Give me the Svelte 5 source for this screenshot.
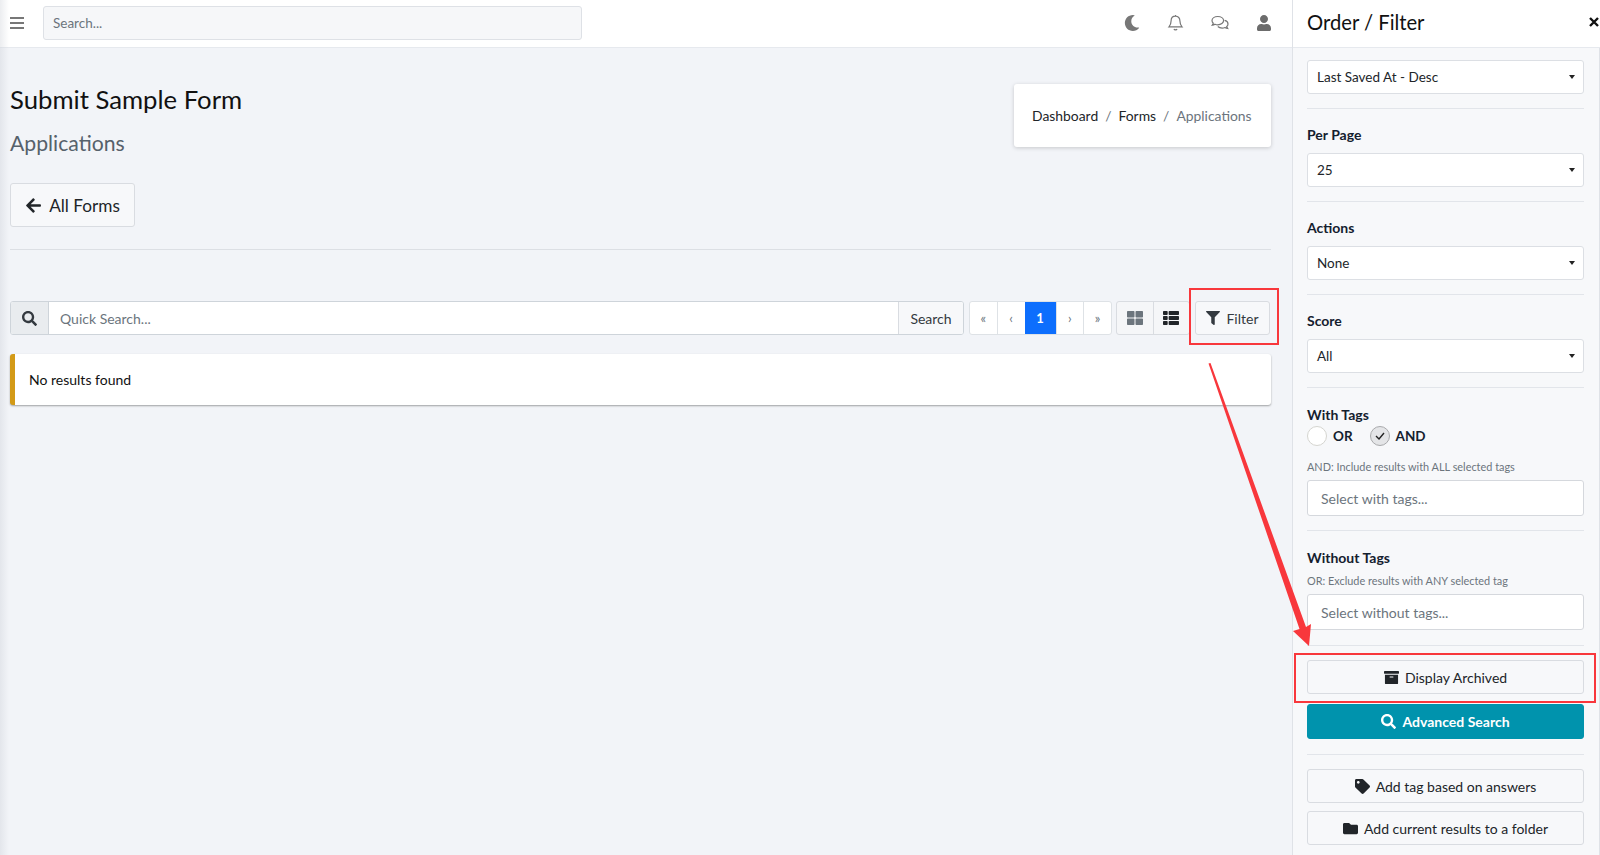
<script>
  const icons = {
    search: ['0 0 512 512', 'M505 442.7L405.3 343c-4.5-4.5-10.6-7-17-7H372c27.6-35.3 44-79.7 44-128C416 93.1 322.9 0 208 0S0 93.1 0 208s93.1 208 208 208c48.3 0 92.7-16.4 128-44v16.3c0 6.4 2.5 12.5 7 17l99.7 99.7c9.4 9.4 24.6 9.4 33.9 0l28.3-28.3c9.4-9.4 9.4-24.6.1-34zM208 336c-70.7 0-128-57.2-128-128 0-70.7 57.2-128 128-128 70.7 0 128 57.2 128 128 0 70.7-57.2 128-128 128z'],
    filter: ['0 0 512 512', 'M487.976 0H24.028C2.71 0-8.047 25.866 7.058 40.971L192 225.941V432c0 7.831 3.821 15.17 10.237 19.662l80 55.98C298.02 518.69 320 507.493 320 487.98V225.941l184.947-184.97C520.021 25.896 509.338 0 487.976 0z'],
    moon: ['0 0 512 512', 'M283.211 512c78.962 0 151.079-35.925 198.857-94.792 7.068-8.708-.639-21.43-11.562-19.35-124.203 23.654-238.262-71.576-238.262-196.954 0-72.222 38.662-138.635 101.498-174.394 9.686-5.512 7.25-20.197-3.756-22.23A258.156 258.156 0 0 0 283.211 0c-141.309 0-256 114.511-256 256 0 141.309 114.511 256 256 256z'],
    user: ['0 0 448 512', 'M224 256c70.7 0 128-57.3 128-128S294.7 0 224 0 96 57.3 96 128s57.3 128 128 128zm89.6 32h-16.7c-22.2 10.2-46.9 16-72.9 16s-50.6-5.8-72.9-16h-16.7C60.2 288 0 348.2 0 422.4V464c0 26.5 21.5 48 48 48h352c26.5 0 48-21.5 48-48v-41.6c0-74.2-60.2-134.4-134.4-134.4z'],
    tag: ['0 0 512 512', 'M0 252.118V48C0 21.49 21.49 0 48 0h204.118a48 48 0 0 1 33.941 14.059l211.882 211.882c18.745 18.745 18.745 49.137 0 67.882L293.823 497.941c-18.745 18.745-49.137 18.745-67.882 0L14.059 286.059A48 48 0 0 1 0 252.118zM112 64c-26.51 0-48 21.49-48 48s21.49 48 48 48 48-21.49 48-48-21.49-48-48-48z'],
    folder: ['0 0 512 512', 'M464 128H272l-64-64H48C21.49 64 0 85.49 0 112v288c0 26.51 21.49 48 48 48h416c26.51 0 48-21.49 48-48V176c0-26.51-21.49-48-48-48z'],
    archive: ['0 0 512 512', 'M32 448c0 17.7 14.3 32 32 32h384c17.7 0 32-14.3 32-32V160H32v288zm160-212c0-6.6 5.4-12 12-12h104c6.6 0 12 5.4 12 12v8c0 6.6-5.4 12-12 12H204c-6.6 0-12-5.4-12-12v-8zM480 32H32C14.3 32 0 46.3 0 64v48c0 8.8 7.2 16 16 16h480c8.8 0 16-7.2 16-16V64c0-17.7-14.3-32-32-32z'],
    back: ['0 0 448 512', 'M257.5 445.1l-22.2 22.2c-9.4 9.4-24.6 9.4-33.9 0L7 273c-9.4-9.4-9.4-24.6 0-33.9L201.4 44.7c9.4-9.4 24.6-9.4 33.9 0l22.2 22.2c9.5 9.5 9.3 25-.4 34.3L136.6 216H424c13.3 0 24 10.7 24 24v32c0 13.3-10.7 24-24 24H136.6l120.5 114.8c9.8 9.3 10 24.8.4 34.3z'],
    grid: ['0 0 512 512', 'M296 32h192c13.255 0 24 10.745 24 24v160c0 13.255-10.745 24-24 24H296c-13.255 0-24-10.745-24-24V56c0-13.255 10.745-24 24-24zm-80 0H24C10.745 32 0 42.745 0 56v160c0 13.255 10.745 24 24 24h192c13.255 0 24-10.745 24-24V56c0-13.255-10.745-24-24-24zM0 296v160c0 13.255 10.745 24 24 24h192c13.255 0 24-10.745 24-24V296c0-13.255-10.745-24-24-24H24c-13.255 0-24 10.745-24 24zm296 184h192c13.255 0 24-10.745 24-24V296c0-13.255-10.745-24-24-24H296c-13.255 0-24 10.745-24 24v160c0 13.255 10.745 24 24 24z'],
    list: ['0 0 512 512', 'M149.333 216v80c0 13.255-10.745 24-24 24H24c-13.255 0-24-10.745-24-24v-80c0-13.255 10.745-24 24-24h101.333c13.255 0 24 10.745 24 24zM0 376v80c0 13.255 10.745 24 24 24h101.333c13.255 0 24-10.745 24-24v-80c0-13.255-10.745-24-24-24H24c-13.255 0-24 10.745-24 24zM125.333 32H24C10.745 32 0 42.745 0 56v80c0 13.255 10.745 24 24 24h101.333c13.255 0 24-10.745 24-24V56c0-13.255-10.745-24-24-24zm80 448H488c13.255 0 24-10.745 24-24v-80c0-13.255-10.745-24-24-24H205.333c-13.255 0-24 10.745-24 24v80c0 13.255 10.745 24 24 24zm-24-424v80c0 13.255 10.745 24 24 24H488c13.255 0 24-10.745 24-24V56c0-13.255-10.745-24-24-24H205.333c-13.255 0-24 10.745-24 24zm24 264H488c13.255 0 24-10.745 24-24v-80c0-13.255-10.745-24-24-24H205.333c-13.255 0-24 10.745-24 24v80c0 13.255 10.745 24 24 24z'],
  }

  const pages = ['«', '‹', '1', '›', '»']
  const selects = [
    { label: 'Per Page', value: '25' },
    { label: 'Actions', value: 'None' },
    { label: 'Score', value: 'All' },
  ]
</script>

{#snippet icon(name, size, color = 'currentColor')}
  <svg class="icon" width={size} height={size} viewBox={icons[name][0]} fill={color} aria-hidden="true">
    <path d={icons[name][1]} />
  </svg>
{/snippet}

<div class="shell">
  <div class="main">
    <header class="topbar">
      <button class="burger" aria-label="Menu"><span></span><span></span><span></span></button>
      <input class="global-search" placeholder="Search..." />
      <div class="top-icons">
        {@render icon('moon', 16, '#777')}
        <svg class="icon" width="17" height="18" viewBox="0 0 17 18" fill="none" stroke="#777" stroke-width="1.2" aria-hidden="true">
          <path d="M8.5 2.2c-2.8 0-4.4 2-4.4 4.6 0 3.6-1 4.8-2.1 6h13c-1.1-1.2-2.1-2.4-2.1-6 0-2.6-1.6-4.6-4.4-4.6zM8.5 1v1.2M7 15c.3 1.2 2.7 1.2 3 0" />
        </svg>
        <svg class="icon" width="18" height="16" viewBox="0 0 18 16" fill="none" stroke="#777" stroke-width="1.2" aria-hidden="true">
          <path d="M6.8 1.5C3.6 1.5 1 3.3 1 5.6c0 1 .5 1.9 1.3 2.6-.2.9-.7 1.6-1 2 1.1-.1 2-.5 2.7-1 .9.4 1.8.6 2.8.6 3.2 0 5.8-1.9 5.8-4.2S10 1.5 6.8 1.5z" />
          <path d="M13.6 5.3c2 .5 3.4 1.9 3.4 3.6 0 1-.5 1.9-1.3 2.6.2.9.7 1.6 1 2-1.1-.1-2-.5-2.7-1-.9.4-1.8.6-2.8.6-1.8 0-3.4-.6-4.4-1.6" />
        </svg>
        {@render icon('user', 16, '#6c6c6c')}
      </div>
    </header>

    <main class="content">
      <div class="page-head">
        <div>
          <h1>Submit Sample Form</h1>
          <h2>Applications</h2>
        </div>
        <nav class="crumbs">
          <span>Dashboard</span><i>/</i><span>Forms</span><i>/</i><span class="current">Applications</span>
        </nav>
      </div>

      <button class="btn back">{@render icon('back', 17)} All Forms</button>
      <hr class="rule" />

      <div class="toolbar">
        <div class="quick">
          <span class="addon">{@render icon('search', 15, '#343a40')}</span>
          <input placeholder="Quick Search..." />
          <button class="search-btn">Search</button>
        </div>
        <div class="pager">
          {#each pages as p}
            <span class:active={p === '1'}>{p}</span>
          {/each}
        </div>
        <div class="views">
          <span>{@render icon('grid', 16, '#6c757d')}</span>
          <span>{@render icon('list', 16, '#212529')}</span>
        </div>
        <button class="btn filter">{@render icon('filter', 14, '#343a40')} Filter</button>
      </div>

      <div class="alert">No results found</div>
    </main>
  </div>

  <aside class="panel">
    <div class="panel-head">
      <span>Order / Filter</span>
      <svg class="close" width="10" height="10" viewBox="0 0 10 10" stroke="#111" stroke-width="2.4" aria-hidden="true"><path d="M1 1l8 8M9 1l-8 8" /></svg>
    </div>
    <div class="panel-body">
      <div class="select">Last Saved At - Desc</div>
      <hr />
      {#each selects as s}
        <div class="label">{s.label}</div>
        <div class="select">{s.value}</div>
        <hr />
      {/each}

      <div class="label tags">With Tags</div>
      <div class="radios">
        <span class="radio"></span><b>OR</b>
        <span class="radio on">
          <svg width="10" height="8" viewBox="0 0 10 8" fill="none" stroke="#222" stroke-width="1.4" aria-hidden="true"><path d="M1 4l3 3 5-6" /></svg>
        </span><b>AND</b>
      </div>
      <small class="hint first">AND: Include results with ALL selected tags</small>
      <input class="tag-input" placeholder="Select with tags..." />
      <hr />

      <div class="label bare">Without Tags</div>
      <small class="hint">OR: Exclude results with ANY selected tag</small>
      <input class="tag-input" placeholder="Select without tags..." />
      <hr class="tight" />

      <button class="btn wide">{@render icon('archive', 15, '#212529')} Display Archived</button>
      <button class="btn wide teal">{@render icon('search', 15, '#fff')} Advanced Search</button>
      <hr class="tight" />
      <button class="btn wide">{@render icon('tag', 15, '#212529')} Add tag based on answers</button>
      <button class="btn wide last">{@render icon('folder', 15, '#212529')} Add current results to a folder</button>
    </div>
  </aside>

  <!-- annotations drawn over the screenshot -->
  <span class="mark mark-filter"></span>
  <span class="mark mark-archived"></span>
  <svg class="arrow" width="1600" height="855" viewBox="0 0 1600 855" aria-hidden="true">
    <path d="M1208.5 363.5L1210.5 363L1306 627L1311 624L1309 646L1293 631L1299.5 629z" fill="#f8373c" />
  </svg>
</div>

<style>
  :global(body) {
    margin: 0;
    background: #f2f4f8;
    font-family: Lato, "Open Sans", sans-serif;
    font-size: 14.5px;
    color: #212529;
  }
  .shell {
    position: relative;
    display: grid;
    grid-template-columns: 1292px 308px;
    height: 855px;
    overflow: hidden;
  }
  .shell::before {
    content: '';
    position: absolute;
    inset: 0 auto 0 0;
    width: 9px;
    background: linear-gradient(90deg, rgba(200, 204, 212, 0.35), rgba(200, 204, 212, 0));
  }
  .icon {
    flex-shrink: 0;
    display: block;
  }
  .topbar {
    height: 48px;
    box-sizing: border-box;
    display: flex;
    align-items: center;
    background: #fff;
    border-bottom: 1px solid #e6e9ee;
    padding: 0 20px 1px 10px;
  }
  .burger {
    width: 14px;
    height: 12px;
    padding: 0;
    border: 0;
    background: none;
    display: flex;
    flex-direction: column;
    justify-content: space-between;
    margin-right: 19px;
  }
  .burger span {
    height: 2px;
    background: #777;
  }
  .global-search {
    width: 539px;
    height: 34px;
    box-sizing: border-box;
    border: 1px solid #dee1e6;
    border-radius: 3px;
    background: #f6f7f9;
    padding: 0 9px;
    font: inherit;
    font-size: 13.5px;
  }
  ::placeholder {
    color: #6c757d;
    opacity: 1;
  }
  .top-icons {
    margin-left: auto;
    display: flex;
    align-items: center;
    gap: 27px;
  }
  .content {
    padding: 36px 21px 0 10px;
  }
  .page-head {
    display: flex;
    justify-content: space-between;
    align-items: flex-start;
  }
  h1 {
    margin: 0;
    font-size: 25.7px;
    font-weight: 400;
    line-height: 31px;
    color: #111;
  }
  h2 {
    margin: 14px 0 0;
    font-size: 21.2px;
    font-weight: 400;
    line-height: 29px;
    color: #56616b;
  }
  .crumbs {
    width: 257px;
    height: 63px;
    box-sizing: border-box;
    background: #fff;
    border-radius: 3px;
    box-shadow: 0 1px 4px rgba(0, 0, 0, 0.18);
    display: flex;
    align-items: center;
    padding-left: 18px;
    white-space: nowrap;
    font-size: 13.9px;
  }
  .crumbs i {
    font-style: normal;
    margin: 0 7px;
    color: #6c757d;
  }
  .crumbs .current {
    color: #6c757d;
  }
  .btn {
    display: flex;
    align-items: center;
    justify-content: center;
    box-sizing: border-box;
    border: 1px solid #d9dce1;
    border-radius: 3px;
    background: #f7f8fa;
    font: inherit;
    color: #212529;
    gap: 6px;
  }
  .back {
    margin-top: 25px;
    width: 125px;
    height: 44px;
    font-size: 17.2px;
    gap: 7px;
  }
  .rule {
    margin: 22px 0 0;
    border: 0;
    border-top: 1px solid #dcdfe4;
  }
  .toolbar {
    display: flex;
    align-items: center;
    margin-top: 51px;
  }
  .quick {
    display: flex;
    width: 954px;
    height: 34px;
    box-sizing: border-box;
    border: 1px solid #ced4da;
    border-radius: 3px;
    overflow: hidden;
    background: #fff;
  }
  .addon {
    width: 37px;
    display: flex;
    align-items: center;
    justify-content: center;
    background: #e9ecef;
    border-right: 1px solid #ced4da;
  }
  .quick input {
    flex: 1;
    min-width: 0;
    border: 0;
    padding: 0 11px;
    font: inherit;
    font-size: 14px;
  }
  .search-btn {
    width: 65px;
    border: 0;
    border-left: 1px solid #d9dce1;
    background: #f7f8fa;
    font: inherit;
    font-size: 14px;
    color: #343a40;
    padding: 0;
  }
  .pager {
    display: flex;
    margin-left: 5px;
    width: 143px;
    height: 34px;
    box-sizing: border-box;
    border: 1px solid #dee2e6;
    border-radius: 3px;
    background: #fff;
    overflow: hidden;
    color: #6c757d;
    font-size: 13px;
  }
  .pager span {
    flex: 1;
    display: flex;
    align-items: center;
    justify-content: center;
    border-left: 1px solid #dee2e6;
  }
  .pager span:first-child {
    border-left: 0;
  }
  .pager .active {
    flex: 0 0 31px;
    border: 0;
    background: #0d6efd;
    color: #fff;
    font-weight: 700;
  }
  .views {
    display: flex;
    margin-left: 4px;
    width: 74px;
    height: 34px;
    box-sizing: border-box;
    border: 1px solid #d9dce1;
    border-radius: 3px;
    background: #f5f6f8;
  }
  .views span {
    flex: 1;
    display: flex;
    align-items: center;
    justify-content: center;
  }
  .views span + span {
    border-left: 1px solid #d9dce1;
  }
  .filter {
    margin-left: 5px;
    width: 75px;
    height: 34px;
    font-size: 14px;
    color: #343a40;
  }
  .alert {
    margin-top: 19px;
    height: 51px;
    box-sizing: border-box;
    background: #fff;
    border-left: 5px solid #d39a17;
    border-radius: 3px;
    box-shadow: 0 1px 2px rgba(0, 0, 0, 0.35);
    display: flex;
    align-items: center;
    padding-left: 14px;
    font-size: 14px;
    color: #111;
  }
  .panel {
    background: #f7f8fa;
    border-left: 1px solid #dfe2e7;
    border-right: 1px solid #dfe2e7;
  }
  .panel-head {
    height: 48px;
    box-sizing: border-box;
    display: flex;
    align-items: center;
    justify-content: space-between;
    background: #fff;
    margin-right: -1px;
    padding: 0 1px 3px 14px;
    border-bottom: 1px solid #e6e9ee;
    font-size: 20.2px;
    color: #111;
  }
  .panel-body {
    padding: 12px 15px 0 14px;
    display: flex;
    flex-direction: column;
  }
  .panel-body hr {
    width: 100%;
    margin: 14px 0 17px;
    border: 0;
    border-top: 1px solid #e2e5ea;
  }
  .label {
    font-weight: 700;
    font-size: 14px;
    line-height: 18px;
    margin-bottom: 9px;
    color: #14202e;
  }
  .select {
    height: 34px;
    box-sizing: border-box;
    flex-shrink: 0;
    background: #fff;
    border: 1px solid #dcdfe4;
    border-radius: 3px;
    display: flex;
    align-items: center;
    padding: 0 9px;
    font-size: 13.5px;
    position: relative;
  }
  .select::after {
    content: '';
    position: absolute;
    right: 8px;
    top: 14px;
    border: 3.5px solid transparent;
    border-top: 4px solid #222;
    border-bottom: 0;
  }
  .label.tags {
    margin: 1px 0 2px;
  }
  .label.bare {
    margin: 1px 0 7px;
  }
  .radios {
    display: flex;
    align-items: center;
    font-size: 13.5px;
    color: #14202e;
  }
  .radios b {
    margin: 0 17px 0 6px;
  }
  .radio {
    width: 20px;
    height: 20px;
    box-sizing: border-box;
    border: 1px solid #d5d5d0;
    border-radius: 50%;
    background: #fff;
    display: flex;
    align-items: center;
    justify-content: center;
  }
  .radio.on {
    background: #e4e5e7;
    border-color: #a9aaac;
  }
  .hint {
    font-size: 10.9px;
    line-height: 14px;
    color: #6c757d;
    margin-bottom: 6px;
    white-space: nowrap;
  }
  .hint.first {
    margin-top: 14px;
  }
  .tag-input {
    height: 36px;
    box-sizing: border-box;
    flex-shrink: 0;
    border: 1px solid #d5d8dd;
    border-radius: 3px;
    background: #fff;
    padding: 0 13px;
    font: inherit;
    font-size: 14px;
    width: 100%;
  }
  .panel-body hr.tight {
    margin: 15px 0 14px;
  }
  .wide {
    height: 34px;
    width: 100%;
    flex-shrink: 0;
    font-size: 14px;
    margin-bottom: 10px;
    background: #f7f8fa;
  }
  .teal {
    height: 35px;
    margin-bottom: 0;
    background: #0093ad;
    border-color: #0093ad;
    color: #fff;
    font-weight: 700;
  }
  .wide.last {
    margin-top: -2px;
  }
  .mark {
    position: absolute;
    box-sizing: border-box;
    border: 2.5px solid #f8373c;
  }
  .mark-filter {
    left: 1189px;
    top: 288px;
    width: 90px;
    height: 57px;
  }
  .mark-archived {
    left: 1294px;
    top: 653px;
    width: 302px;
    height: 50px;
  }
  .arrow {
    position: absolute;
    inset: 0;
    pointer-events: none;
  }
</style>
